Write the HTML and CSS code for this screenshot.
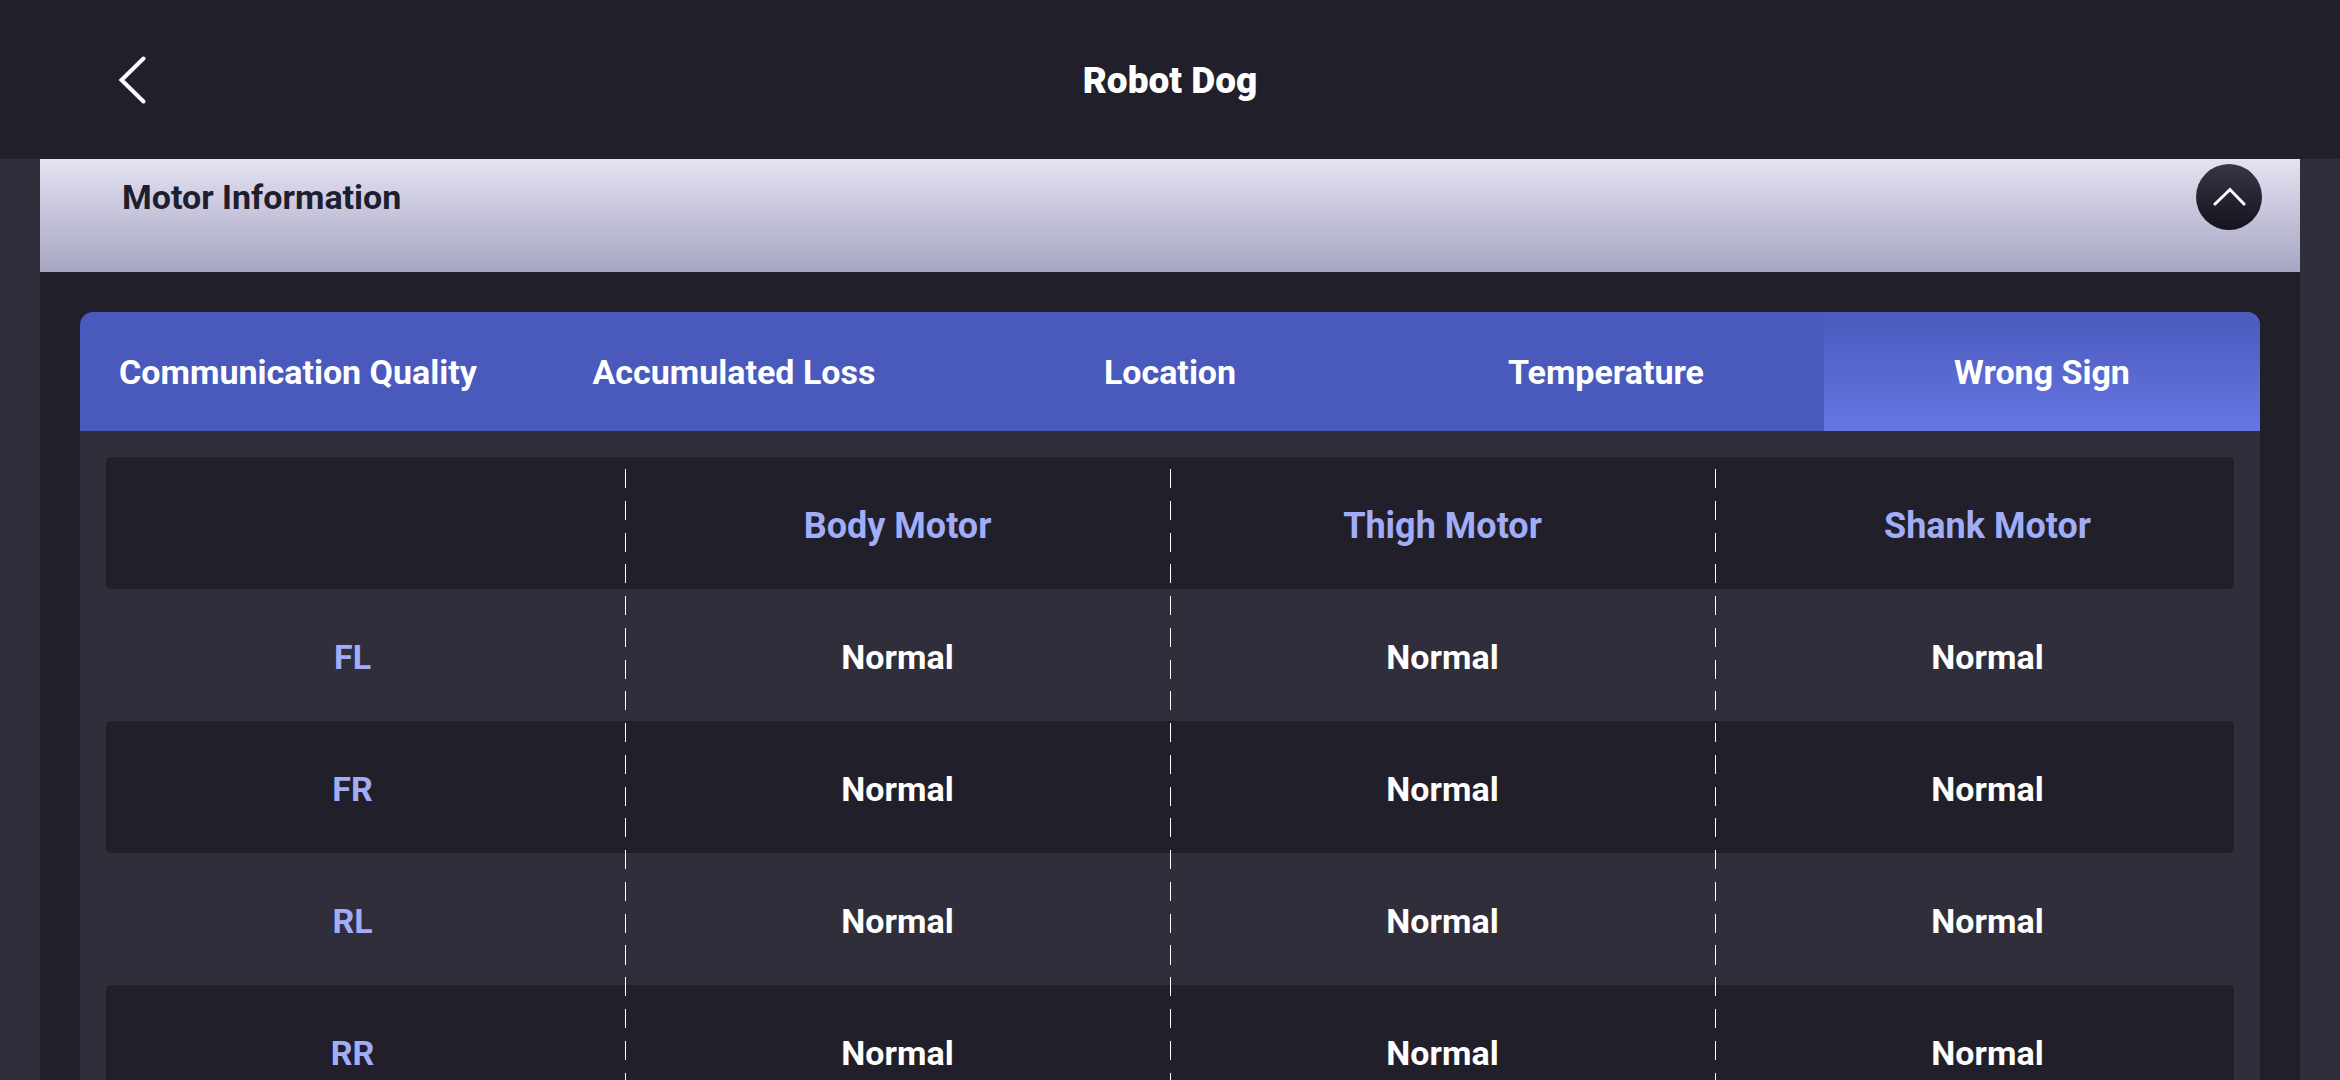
FILE: index.html
```html
<!DOCTYPE html>
<html lang="en">
<head>
<meta charset="utf-8">
<meta name="viewport" content="width=device-width, initial-scale=1">
<title>Robot Dog</title>
<link rel="stylesheet" href="styles.css">
</head>
<body>
<div class="app">
  <header class="topbar">
    <button class="back" type="button" aria-label="Back">
      <svg width="28" height="50" viewBox="0 0 28 50" aria-hidden="true"><path d="M25.500 3.500 3.500 25 25.500 46.500"/></svg>
    </button>
    <h1 class="title">Robot Dog</h1>
  </header>
  <main class="content">
    <section class="card">
      <div class="card-head">
        <h2 class="card-title">Motor Information</h2>
        <button class="collapse" type="button" aria-label="Collapse" aria-expanded="true">
          <svg width="34" height="20" viewBox="0 0 34 20" aria-hidden="true"><path d="M3 17 18 2.500 32 17"/></svg>
        </button>
      </div>
      <div class="panel">
        <div class="tabs" role="tablist">
          <button class="tab" type="button" role="tab">Communication Quality</button>
          <button class="tab" type="button" role="tab">Accumulated Loss</button>
          <button class="tab" type="button" role="tab">Location</button>
          <button class="tab" type="button" role="tab">Temperature</button>
          <button class="tab tab-active" type="button" role="tab" aria-selected="true">Wrong Sign</button>
        </div>
        <div class="grid">
          <table class="motors">
            <thead>
              <tr><td></td><th scope="col">Body Motor</th><th scope="col">Thigh Motor</th><th scope="col">Shank Motor</th></tr>
            </thead>
            <tbody>
              <tr><th scope="row">FL</th><td>Normal</td><td>Normal</td><td>Normal</td></tr>
              <tr><th scope="row">FR</th><td>Normal</td><td>Normal</td><td>Normal</td></tr>
              <tr><th scope="row">RL</th><td>Normal</td><td>Normal</td><td>Normal</td></tr>
              <tr><th scope="row">RR</th><td>Normal</td><td>Normal</td><td>Normal</td></tr>
            </tbody>
          </table>
          <svg class="dividers" aria-hidden="true">
            <line x1="25%" x2="25%" y1="12" y2="100%" pathLength="102"/>
            <line x1="50%" x2="50%" y1="12" y2="100%" pathLength="102"/>
            <line x1="75%" x2="75%" y1="12" y2="100%" pathLength="102"/>
          </svg>
        </div>
      </div>
    </section>
  </main>
</div>
</body>
</html>
```
FILE: styles.css
```css
* {
  box-sizing: border-box;
}

body {
  margin: 0;
  background: #302e3a;
  color: #fff;
  font-family: Roboto, "Liberation Sans", sans-serif;
}

button {
  border: 0;
  padding: 0;
  background: none;
  color: inherit;
  font: inherit;
  cursor: pointer;
}

svg {
  display: block;
  fill: none;
  stroke: #fff;
}

.app {
  display: flex;
  flex-direction: column;
  height: 100vh;
  overflow: hidden;
}

.topbar {
  z-index: 1;
  display: grid;
  grid-template-columns: 1fr auto 1fr;
  align-items: center;
  flex: none;
  height: 159px;
  padding: 0 118px;
  background: #211f2a;
}

.back {
  justify-self: start;
}

.back svg {
  stroke-width: 4;
  stroke-linecap: round;
}

.title {
  margin: 0;
  padding-top: 3px;
  font-size: 37px;
  font-weight: 900;
  line-height: 48px;
}

.content {
  flex: none;
  margin-top: -39px;
  padding: 0 40px;
}

.card {
  background: #211f2a;
}

.card-head {
  display: flex;
  align-items: center;
  justify-content: space-between;
  height: 152px;
  padding: 2px 38px 0 82px;
  background: linear-gradient(#e9e6f6 0, #e4e1f1 26%, #a6a6c3);
}

.card-title {
  margin: 0;
  color: #1f1e2e;
  font-size: 34px;
  font-weight: 700;
  line-height: 40px;
}

.collapse {
  display: grid;
  place-items: center;
  width: 66px;
  height: 66px;
  border-radius: 50%;
  background: linear-gradient(#383547, #15131e);
}

.collapse svg {
  stroke-width: 3;
  stroke-linecap: round;
}

.panel {
  padding: 40px;
}

.tabs {
  display: grid;
  grid-template-columns: repeat(5, 1fr);
  overflow: hidden;
  height: 119px;
  border-radius: 13px 13px 0 0;
  background: #495abc;
}

.tab {
  font-size: 34px;
  font-weight: 700;
  line-height: 40px;
}

.tab-active {
  background: linear-gradient(#4a5abd, #6876e3);
}

.grid {
  position: relative;
  padding: 26px 0;
  background: #302e3a;
}

.motors {
  width: 100%;
  table-layout: fixed;
  border-spacing: 0;
  isolation: isolate;
}

.motors tr {
  position: relative;
  height: 132px;
}

/* Shaded stripe, inset from both edges of the panel */
.motors thead td:first-child::before,
.motors tbody tr:nth-child(even) th::before {
  content: "";
  position: absolute;
  z-index: -1;
  inset: 0 26px;
  border-radius: 5px;
  background: #211f2a;
}

.motors th,
.motors td {
  padding: 4px 0 0;
  font-size: 34px;
  font-weight: 700;
  line-height: 40px;
  text-align: center;
}

.motors th {
  color: #a2adf8;
}

.motors thead th {
  padding-top: 6px;
  font-size: 36px;
}

.dividers {
  position: absolute;
  top: 26px;
  left: 0;
  width: 100%;
  height: calc(100% - 52px);
  pointer-events: none;
  stroke-dasharray: 3 2;
  shape-rendering: crispEdges;
}
```
